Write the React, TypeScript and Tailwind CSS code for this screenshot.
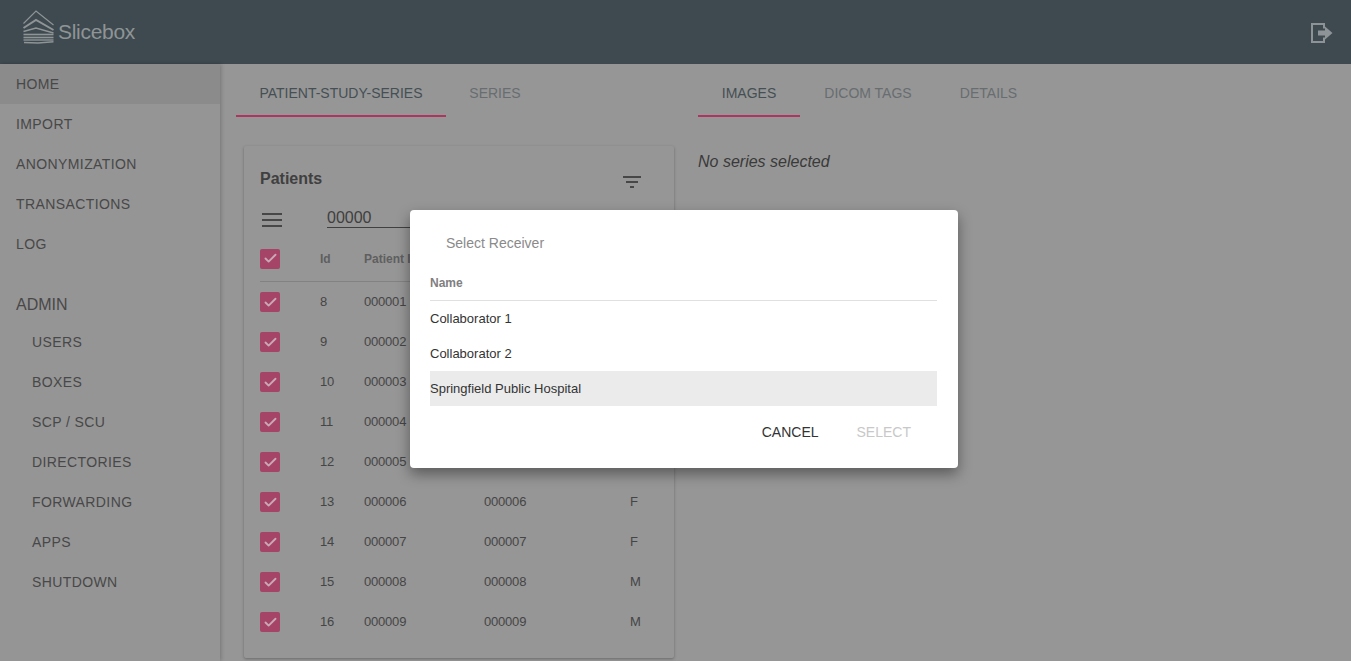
import { Check } from 'lucide-react';

const MAIN_ITEMS = ['HOME', 'IMPORT', 'ANONYMIZATION', 'TRANSACTIONS', 'LOG'];
const ADMIN_ITEMS = ['USERS', 'BOXES', 'SCP / SCU', 'DIRECTORIES', 'FORWARDING', 'APPS', 'SHUTDOWN'];

const PATIENTS = [
  { id: 8, pid: '000001', name: '000001', sex: 'M' },
  { id: 9, pid: '000002', name: '000002', sex: 'F' },
  { id: 10, pid: '000003', name: '000003', sex: 'M' },
  { id: 11, pid: '000004', name: '000004', sex: 'M' },
  { id: 12, pid: '000005', name: '000005', sex: 'F' },
  { id: 13, pid: '000006', name: '000006', sex: 'F' },
  { id: 14, pid: '000007', name: '000007', sex: 'F' },
  { id: 15, pid: '000008', name: '000008', sex: 'M' },
  { id: 16, pid: '000009', name: '000009', sex: 'M' },
];

const RECEIVERS = ['Collaborator 1', 'Collaborator 2', 'Springfield Public Hospital'];

function Logo() {
  return (
    <svg width="33" height="34" viewBox="0 0 33 34" fill="none" stroke="#8f9496" className="shrink-0">
      <path d="M1.5 13.5 L14 1 L31.5 15" strokeWidth="1.2" />
      <path d="M1.5 18 L14 10 L31.5 20" strokeWidth="2" />
      <path d="M1.5 21.5 L14 18 L31.5 23" strokeWidth="1.4" />
      <path d="M1.5 24.5 L31.5 24.5" strokeWidth="1.6" />
      <path d="M1.5 27.5 L31.5 27.5" strokeWidth="1.6" />
      <path d="M1.5 30 L31.5 30" strokeWidth="1.4" />
      <path d="M2 32.5 L16 33 L31.5 31.8" strokeWidth="1.4" />
    </svg>
  );
}

function ExitIcon() {
  return (
    <svg width="22" height="20" viewBox="0 0 22 20" fill="none">
      <path d="M13 5.5 V1 H1 V19 H13 V14.5" stroke="#8d9396" strokeWidth="2" />
      <path d="M7 7.5 H14 V3.5 L21.5 10 L14 16.5 V12.5 H7 Z" fill="#8d9396" />
    </svg>
  );
}

function Checkbox() {
  return (
    <div className="w-5 h-5 rounded-[2px] bg-[#a64468] flex items-center justify-center shrink-0">
      <Check size={15} strokeWidth={3} className="text-[#c9a9b5]" />
    </div>
  );
}

function Tab({ label, active, className }: { label: string; active?: boolean; className: string }) {
  return (
    <div className={`h-[53px] flex items-center justify-center pt-[6px] text-sm border-b-2 ${active ? 'text-[#454f54] border-[#ae3560]' : 'text-[#686d70] border-transparent'} ${className}`}>
      {label}
    </div>
  );
}

export default function App() {
  return (
    <div className="relative h-[661px] w-[1351px] overflow-hidden bg-[#969696] font-['Liberation_Sans',Arial,sans-serif]">
      {/* Header */}
      <header className="h-16 bg-[#3e4a50] flex items-center justify-between pl-[22px] pr-[18px]">
        <div className="flex items-center gap-[3px] -mt-[10px]">
          <Logo />
          <span className="text-[21px] text-[#8f9496] tracking-[-0.3px] mt-[10px]">Slicebox</span>
        </div>
        <div className="mt-[2px]">
          <ExitIcon />
        </div>
      </header>

      <div className="flex h-[597px]">
        {/* Sidebar */}
        <nav className="w-[220px] shrink-0 bg-[#959595] shadow-[1px_0_4px_rgba(0,0,0,0.22)] text-sm text-[#484848] tracking-[0.4px]">
          {MAIN_ITEMS.map((item, i) => (
            <div key={item} className={`h-10 flex items-center pl-4 ${i === 0 ? 'bg-[#8b8b8b]' : ''}`}>{item}</div>
          ))}
          <div className="h-[42px] mt-[20px] flex items-center pl-4 text-base tracking-normal">ADMIN</div>
          <div className="-mt-[4px]">
            {ADMIN_ITEMS.map((item) => (
              <div key={item} className="h-10 flex items-center pl-8">{item}</div>
            ))}
          </div>
        </nav>

        {/* Left column */}
        <main className="w-[454px] shrink-0 pl-4">
          <div className="flex">
            <Tab label="PATIENT-STUDY-SERIES" active className="w-[210px]" />
            <Tab label="SERIES" className="w-[98px]" />
          </div>
          <section className="mt-[29px] ml-2 w-[430px] h-[512px] rounded-[2px] bg-[#969696] shadow-[0_1px_3px_rgba(0,0,0,0.3)] pl-4">
            <div className="flex items-start justify-between pt-[23px] pr-[28px] h-[54px]">
              <h2 className="text-base font-bold leading-5 text-[#404040]">Patients</h2>
              <svg width="18" height="12" viewBox="0 0 18 12" className="mt-[7px] mr-[5px]" fill="#474747">
                <rect x="0" y="0" width="18" height="2" />
                <rect x="3" y="5" width="12" height="2" />
                <rect x="7" y="10" width="4" height="2" />
              </svg>
            </div>
            <div className="flex items-start h-[35px] pt-[8px]">
              <svg width="20" height="14" viewBox="0 0 20 14" className="mt-[5px] ml-[2px]" fill="#474747">
                <rect x="0" y="0" width="20" height="2" />
                <rect x="0" y="6" width="20" height="2" />
                <rect x="0" y="12" width="20" height="2" />
              </svg>
              <div className="ml-[45px] w-[120px] h-[21px] border-b border-[#404040] text-base leading-[22px] text-[#3f3f3f] mt-[-1px]">00000</div>
            </div>
            <div className="mr-4 h-[47px] pt-[1px] flex items-center border-b border-[#828282] text-xs font-bold text-[#5f5f5f]">
              <Checkbox />
              <span className="ml-10 w-11">Id</span>
              <span>Patient ID</span>
            </div>
            {PATIENTS.map((p) => (
              <div key={p.id} className="h-10 flex items-center text-[13px] leading-4 text-[#454545] tracking-[-0.2px]">
                <Checkbox />
                <span className="ml-10 w-11 -mt-[1px]">{p.id}</span>
                <span className="w-[120px] -mt-[1px]">{p.pid}</span>
                <span className="w-[146px] -mt-[1px]">{p.name}</span>
                <span className="-mt-[1px]">{p.sex}</span>
              </div>
            ))}
          </section>
        </main>

        {/* Right column */}
        <div className="flex-1 pl-[24px]">
          <div className="flex">
            <Tab label="IMAGES" active className="w-[102px]" />
            <Tab label="DICOM TAGS" className="w-[136px]" />
            <Tab label="DETAILS" className="w-[105px]" />
          </div>
          <p className="mt-[35px] text-base italic leading-5 text-[#3a3a3a]">No series selected</p>
        </div>
      </div>

      {/* Select receiver dialog */}
      <div className="absolute left-[410px] top-[210px] w-[548px] h-[258px] bg-white rounded-[4px] shadow-[0_6px_14px_rgba(0,0,0,0.4)] px-5">
        <h3 className="ml-4 pt-[25px] text-sm leading-4 text-[#8a8a8a]">Select Receiver</h3>
        <div className="mt-[17px] w-[507px]">
          <div className="h-[33px] flex items-center border-b border-[#e0e0e0] pb-[2px] text-xs font-bold text-[#808080]">Name</div>
          {RECEIVERS.map((r, i) => (
            <div key={r} className={`h-[35px] flex items-center text-[13px] text-[#333333] ${i === 2 ? 'bg-[#ebebeb]' : ''}`}>{r}</div>
          ))}
        </div>
        <div className="flex justify-end items-center gap-[38px] pr-[27px] pt-[16px] text-sm">
          <span className="text-[#333333]">CANCEL</span>
          <span className="text-[#c8c8c8]">SELECT</span>
        </div>
      </div>
    </div>
  );
}
